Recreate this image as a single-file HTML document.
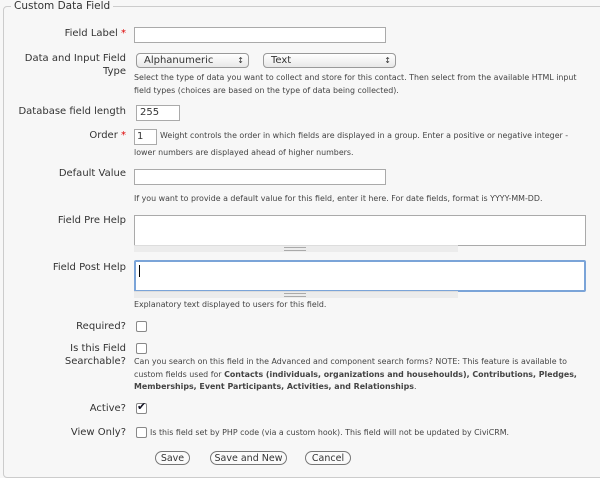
<!DOCTYPE html>
<html><head><style>
body{margin:0;width:600px;height:464px;background:#f7f7f7;font-family:"DejaVu Sans","Liberation Sans",sans-serif;color:#333;position:relative;overflow:hidden}
.a{position:absolute;white-space:nowrap}
.l{font-size:10px;text-align:right;width:126px;left:0}
.h{font-size:7.9px;color:#444;left:134px;line-height:12.5px}
.i{position:absolute;background:#fff;border:1px solid #aaa;box-sizing:border-box;font-size:10px;padding-left:3px;line-height:13px}
.s{position:absolute;border:1px solid #999;border-radius:4px;background:linear-gradient(#fff,#e8e8e8);box-sizing:border-box;font-size:10px;padding-left:7px;line-height:13px}
.s:after{content:"\2195";position:absolute;right:4px;top:0;font-size:8px}
.r{color:#d00}
.cb{position:absolute;width:9px;height:9px;border:1px solid #888;border-radius:2px;background:#fff;left:136px}
.g{position:absolute;left:134px;width:324px;height:6px;background:#ececec;border-top:1px solid #ddd}
.g:after{content:"";position:absolute;left:150px;top:1px;width:22px;height:2px;border-top:1px solid #aaa;border-bottom:1px solid #aaa}
.b{position:absolute;top:451px;height:14px;border:1px solid #777;border-radius:8px;background:#fafafa;font-size:9.5px;line-height:13px;text-align:center;box-sizing:border-box}
</style></head><body>
<div style="position:absolute;left:3px;top:6px;width:640px;height:470px;border:1px solid #ccc;border-radius:4px"></div>
<div class="a" style="left:11px;top:0px;background:#f7f7f7;padding:0 3px;font-size:10.5px;color:#333">Custom Data Field</div>

<div class="a l" style="top:28px">Field Label <span class="r">*</span></div>
<div class="i" style="left:134px;top:27px;width:252px;height:16px"></div>

<div class="a l" style="top:53px;line-height:12.5px">Data and Input Field<br>Type</div>
<div class="s" style="left:136px;top:53px;width:113px;height:15px">Alphanumeric</div>
<div class="s" style="left:263px;top:53px;width:133px;height:15px">Text</div>
<div class="a h" style="top:72px">Select the type of data you want to collect and store for this contact. Then select from the available HTML input<br>field types (choices are based on the type of data being collected).</div>

<div class="a l" style="top:106px">Database field length</div>
<div class="i" style="left:136px;top:105px;width:44px;height:16px">255</div>

<div class="a l" style="top:130px">Order <span class="r">*</span></div>
<div class="i" style="left:134px;top:129px;width:23px;height:16px;padding-left:2px">1</div>
<div class="a h" style="top:130px;left:160px">Weight controls the order in which fields are displayed in a group. Enter a positive or negative integer -</div>
<div class="a h" style="top:147px">lower numbers are displayed ahead of higher numbers.</div>

<div class="a l" style="top:168px">Default Value</div>
<div class="i" style="left:134px;top:169px;width:252px;height:16px"></div>
<div class="a h" style="top:193px">If you want to provide a default value for this field, enter it here. For date fields, format is YYYY-MM-DD.</div>

<div class="a l" style="top:215px">Field Pre Help</div>
<div class="i" style="left:134px;top:215px;width:452px;height:31px"></div>
<div class="g" style="top:245px"></div>

<div class="a l" style="top:262px">Field Post Help</div>
<div class="i" style="left:134px;top:260px;width:452px;height:32px;border:2px solid #7ba4d8;border-radius:2px"><span style="display:inline-block;width:1px;height:12px;background:#000;margin-top:3px"></span></div>
<div class="g" style="top:291px"></div>
<div class="a h" style="top:299px">Explanatory text displayed to users for this field.</div>

<div class="a l" style="top:321px">Required?</div>
<div class="cb" style="top:321px"></div>

<div class="a l" style="top:342px;line-height:13px">Is this Field<br>Searchable?</div>
<div class="cb" style="top:343px"></div>
<div class="a h" style="top:356px">Can you search on this field in the Advanced and component search forms? NOTE: This feature is available to<br>custom fields used for <b>Contacts (individuals, organizations and househoulds), Contributions, Pledges,</b><br><b>Memberships, Event Participants, Activities, and Relationships</b>.</div>

<div class="a l" style="top:403px">Active?</div>
<div class="cb" style="top:403px"></div>
<div class="a" style="left:137px;top:400px;font-size:11px;font-weight:bold;color:#112">✔</div>

<div class="a l" style="top:427px">View Only?</div>
<div class="cb" style="top:427px"></div>
<div class="a h" style="top:427px;left:150px">Is this field set by PHP code (via a custom hook). This field will not be updated by CiviCRM.</div>

<div class="b" style="left:155px;width:35px">Save</div>
<div class="b" style="left:210px;width:77px">Save and New</div>
<div class="b" style="left:305px;width:46px">Cancel</div>
</body></html>
